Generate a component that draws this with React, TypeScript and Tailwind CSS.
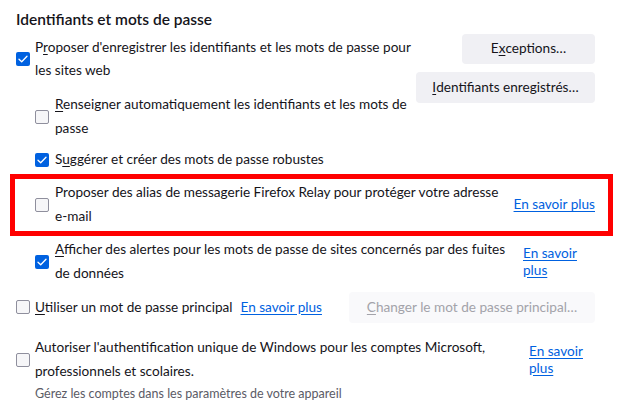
import React from "react";

function Box({ checked }: { checked?: boolean }) {
  if (checked) {
    return (
      <span className="flex h-[14px] w-[14px] shrink-0 items-center justify-center rounded-[2px] bg-[#0061e0]">
        <svg width="10" height="8" viewBox="0 0 10 8">
          <path d="M1 4.2 L3.7 6.8 L9 1.2" stroke="white" strokeWidth="1.3" fill="none" strokeLinecap="round" strokeLinejoin="round" />
        </svg>
      </span>
    );
  }
  return <span className="block h-[14px] w-[14px] shrink-0 rounded-[2px] border border-[#8f8f9d] bg-[#f6f6f8]" />;
}

function U({ children }: { children: React.ReactNode }) {
  return <span className="underline underline-offset-[2px]">{children}</span>;
}

function Link({ children, className }: { children: React.ReactNode; className?: string }) {
  return (
    <span className={"text-[#0061e0] underline underline-offset-[2px] decoration-[#0061e0] " + (className ?? "")}>
      {children}
    </span>
  );
}

export default function App() {
  return (
    <div className="h-[412px] w-[622px] overflow-hidden bg-white font-['Lato',sans-serif] text-[13.6px] leading-[23.5px] text-[#15141a]">
      <div className="ml-[16px] mt-[6.6px] text-[15.5px] font-semibold leading-[24px]">Identifiants et mots de passe</div>

      <div className="ml-[16px] mr-[27px] mt-[3.4px] flex items-start justify-between">
        <div className="flex flex-col pt-[2px]">
          <div className="flex items-center">
            <Box checked />
            <div className="ml-[5px] whitespace-nowrap">
              P<U>r</U>oposer d'enregistrer les identifiants et les mots de passe pour
              <br />
              les sites web
            </div>
          </div>
          <div className="ml-[19px] mt-[10.2px] flex items-center">
            <Box />
            <div className="ml-[6px] whitespace-nowrap">
              <U>R</U>enseigner automatiquement les identifiants et les mots de
              <br />
              passe
            </div>
          </div>
          <div className="ml-[19px] mt-[8px] flex items-center">
            <Box checked />
            <div className="ml-[6px] whitespace-nowrap">
              S<U>u</U>ggérer et créer des mots de passe robustes
            </div>
          </div>
        </div>
        <div className="flex flex-col items-end gap-[8px]">
          <div className="flex h-[30px] w-[133px] items-center justify-center rounded-[4px] bg-[#f0f0f4] leading-none">
            E<U>x</U>ceptions…
          </div>
          <div className="flex h-[31px] w-[179px] items-center justify-center rounded-[4px] bg-[#f0f0f4] leading-none">
            <U>I</U>dentifiants enregistrés…
          </div>
        </div>
      </div>

      <div className="ml-[10px] mt-[2.3px] flex h-[62px] w-[603px] items-center border-[5px] border-[#ff0000] pl-[20px] pr-[13px]">
        <Box />
        <div className="ml-[6px] flex-1 whitespace-nowrap">
          Proposer des alias de messagerie Firefox Relay pour protéger votre adresse
          <br />
          e-mail
        </div>
        <Link className="whitespace-nowrap">En savoir plus</Link>
      </div>

      <div className="ml-[35px] mr-[27px] mt-[2.2px] flex items-center">
        <Box checked />
        <div className="ml-[6px] flex-1 whitespace-nowrap">
          <U>A</U>fficher des alertes pour les mots de passe de sites concernés par des fuites
          <br />
          de données
        </div>
        <div className="w-[72px] leading-[17px]">
          <Link>
            En savoir
            <br />
            plus
          </Link>
        </div>
      </div>

      <div className="ml-[16px] mr-[27px] mt-[6.8px] flex h-[31px] items-center">
        <Box />
        <div className="ml-[5px] whitespace-nowrap">
          <U>U</U>tiliser un mot de passe principal
        </div>
        <Link className="ml-[8px] whitespace-nowrap">En savoir plus</Link>
        <div className="flex-1" />
        <div className="flex h-[31px] w-[246px] items-center justify-center rounded-[4px] bg-[#f9f9fb] leading-none text-[#a3a3aa]">
          <U>C</U>hanger le mot de passe principal…
        </div>
      </div>

      <div className="ml-[16px] mr-[27px] mt-[13.2px] flex items-center">
        <Box />
        <div className="ml-[5px] flex-1 whitespace-nowrap">
          Autoriser l'authentification unique de Windows pour les comptes Microsoft,
          <br />
          professionnels et scolaires.
        </div>
        <div className="w-[66px] leading-[17px]">
          <Link>
            En savoir
            <br />
            plus
          </Link>
        </div>
      </div>

      <div className="ml-[35px] mt-[2px] text-[12.5px] leading-[17px] text-[#5b5b66]">
        Gérez les comptes dans les paramètres de votre appareil
      </div>
    </div>
  );
}
